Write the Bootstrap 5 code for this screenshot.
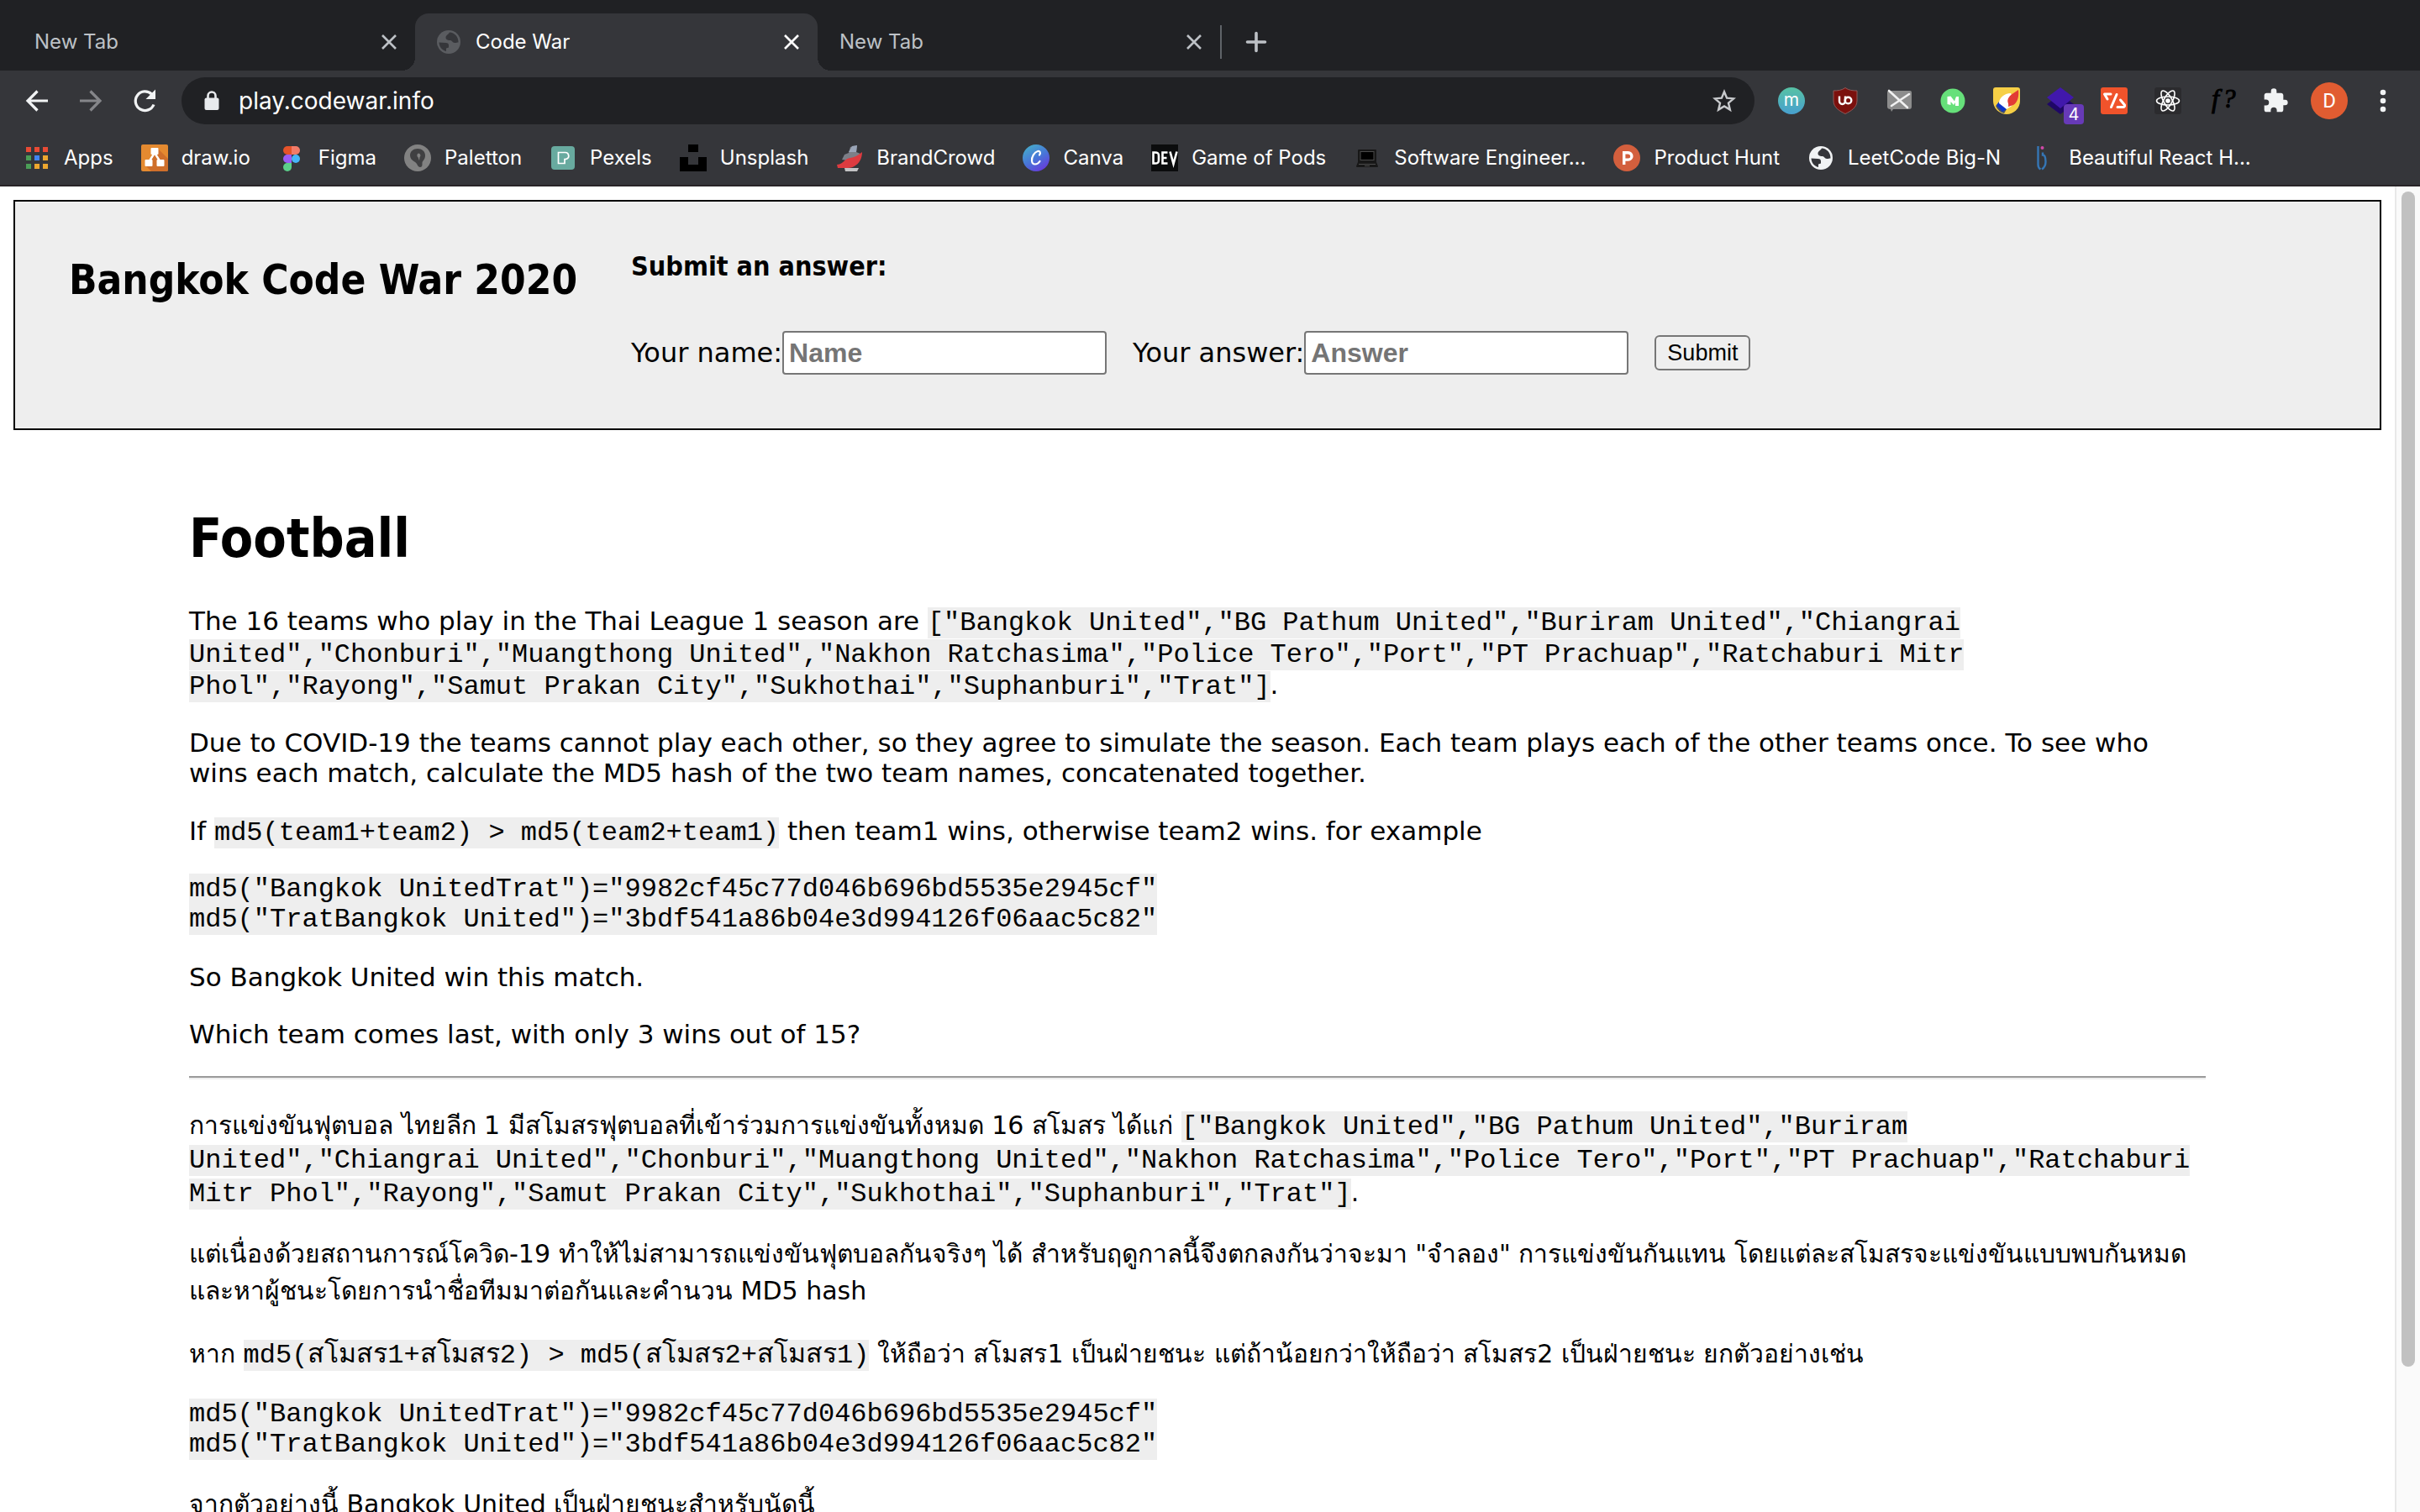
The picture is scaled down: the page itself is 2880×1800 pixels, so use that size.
<!DOCTYPE html>
<html lang="en" data-bs-theme="light">
<head>
<meta charset="utf-8">
<meta name="viewport" content="width=device-width, initial-scale=1">
<title>Code War</title>
<link href="https://cdn.jsdelivr.net/npm/bootstrap@5.3.0/dist/css/bootstrap.min.css" rel="stylesheet">
<style>
  body { font-family: "DejaVu Sans", sans-serif; font-size: 31px; line-height: 36px; color: #000; background: #fff; }
  svg { display: block; flex: none; }
  a.bm, .chrome-bar { font-family: Inter, sans-serif; font-size: 24px; line-height: 32px; }

  /* browser window */
  .tab-strip { background: #202124; height: 84px; padding: 16px 0 0 15px; }
  .win-tab { width: 479px; height: 68px; padding: 0 21px 0 26px; color: #bdc1c6; }
  .win-tab.current { background: #35363a; color: #fff; border-radius: 16px 16px 0 0; position: relative; }
  .win-tab.current::before, .win-tab.current::after { content: ""; position: absolute; bottom: 0; width: 16px; height: 16px; }
  .win-tab.current::before { left: -16px; background: radial-gradient(circle at 0 0, transparent 16px, #35363a 16px); }
  .win-tab.current::after { right: -16px; background: radial-gradient(circle at 100% 0, transparent 16px, #35363a 16px); }
  .win-tab .favicon { margin-right: 18px; }
  .tab-divider { width: 2px; height: 40px; background: #5f6368; }
  .plain-btn { background: none; border: 0; padding: 0; color: inherit; }
  .new-tab { margin-left: 28px; color: #bdc1c6; }

  .tool-row { background: #35363a; height: 72px; padding: 0 12px; }
  .tool-btn { width: 64px; height: 64px; }
  .tool-btn svg { overflow: visible; }
  .omnibox { height: 56px; border-radius: 28px; background: #202124; margin: 0 12px; padding: 0 22px 0 25px; gap: 21px; }
  .omnibox input { background: none; border: 0; outline: 0; color: #fff; font: 28px/40px Inter, sans-serif; padding: 0; min-width: 0; }
  .count-badge { right: 4px; bottom: 4px; width: 24px; height: 24px; border-radius: 4px; background: #673ab7; color: #fff; font-size: 20px; line-height: 24px; }

  .bm-row { background: #35363a; height: 66px; padding: 0 28px; gap: 33px; border-bottom: 2px solid #282427; }
  a.bm { color: #fff; gap: 16px; }

  /* page */
  .site-head { margin: 16px; border: 2px solid #000; background: #eee; padding: 58px 64px 64px; gap: 64px; }
  .site-head h2 { font: 700 49px/58px "DejaVu Sans Condensed", "DejaVu Sans", sans-serif; padding-top: 7px; }
  .site-head h3 { font: 700 32px/38px "DejaVu Sans Condensed", "DejaVu Sans", sans-serif; margin-bottom: 58px; }
  .answer-form { font-size: 32px; }
  .answer-form input { width: 386px; height: 52px; border: 2px solid #767676; border-radius: 4px; background: #fff; padding: 0 6px; margin-right: 31px; font: 700 32px/40px "Liberation Sans", Arial, sans-serif; }
  .answer-form input::placeholder { color: #757575; opacity: 1; }
  .answer-form .send { border: 2px solid #767676; border-radius: 6px; background: #efefef; color: #000; font: 27px/38px "Liberation Sans", Arial, sans-serif; padding: 0 13px; }

  .puzzle { max-width: 2400px; padding-top: 75px; }
  .puzzle h1 { font: 700 64px/76px "DejaVu Sans Condensed", "DejaVu Sans", sans-serif; margin-bottom: 41px; }
  .puzzle p { margin: 0 0 32px; }
  .puzzle code { font: 32px/28px "Liberation Mono", monospace; color: #000; background: #eee; word-wrap: normal; }
  .puzzle .with-code { line-height: 38px; }
  .puzzle code.listing { display: block; width: fit-content; line-height: 36px; padding-top: 1px; margin-bottom: 32px; }
  .puzzle hr { margin: 0 0 35px; border: 0; border-top: 2px solid #9a9a9a; border-bottom: 2px solid #eee; opacity: 1; }
  .thai { font-size: 30px; line-height: 44px; }
  .puzzle .thai p, .puzzle .thai code.listing { margin-bottom: 31px; }
  .thai .team-list { line-height: 40px; }

  .scroll-track { width: 30px; flex: none; background: #fafafa; border-left: 2px solid #e8e8e8; padding: 6px 6px 0; }
  .scroll-thumb { height: 89%; border-radius: 8px; background: #c1c1c1; }
</style>
<script src="https://cdn.jsdelivr.net/npm/bootstrap@5.3.0/dist/js/bootstrap.bundle.min.js"></script>
</head>
<body class="vh-100 d-flex flex-column overflow-hidden">

<header class="chrome-bar flex-shrink-0">
  <div class="tab-strip d-flex align-items-center">
    <div class="win-tab d-flex align-items-center"><span class="flex-grow-1">New Tab</span>
      <button class="plain-btn" aria-label="Close tab"><svg width="20" height="20" viewBox="0 0 20 20" stroke="currentColor" stroke-width="2.6"><path d="M2 2l16 16M18 2L2 18"/></svg></button></div>
    <div class="win-tab current d-flex align-items-center">
      <svg class="favicon" width="28" height="28" viewBox="0 0 28 28"><circle cx="14" cy="14" r="14" fill="#5a5c60"/><path d="M2.500 14.500l8 .5c2.500 0 3.500 1 3.500 3v2.500l-3 1V25C6 23.800 2.600 19.500 2.500 14.500zM15 2.600c-1.500 3-4.500 3-4.500 6.400 0 2.500 3.500 3 5.500 3s2.500 3 5 3 3.500-.8 4.500-.5C25.600 8 21 2.800 15 2.600z" fill="#35363a"/></svg>
      <span class="flex-grow-1">Code War</span>
      <button class="plain-btn" aria-label="Close tab"><svg width="20" height="20" viewBox="0 0 20 20" stroke="currentColor" stroke-width="2.6"><path d="M2 2l16 16M18 2L2 18"/></svg></button></div>
    <div class="win-tab d-flex align-items-center"><span class="flex-grow-1">New Tab</span>
      <button class="plain-btn" aria-label="Close tab"><svg width="20" height="20" viewBox="0 0 20 20" stroke="currentColor" stroke-width="2.6"><path d="M2 2l16 16M18 2L2 18"/></svg></button></div>
    <span class="tab-divider"></span>
    <button class="plain-btn new-tab" aria-label="New tab"><svg width="26" height="26" viewBox="0 0 26 26" stroke="currentColor" stroke-width="3.600" stroke-linecap="round"><path d="M13 2.500v21M2.500 13h21"/></svg></button>
  </div>

  <div class="tool-row d-flex align-items-center">
    <button class="plain-btn tool-btn d-flex align-items-center justify-content-center" aria-label="Back"><svg width="28" height="28" viewBox="0 0 28 28" fill="none" stroke="#f1f3f4" stroke-width="3.200"><path d="M27 14H4M14.500 2.500L3 14l11.500 11.500"/></svg></button>
    <button class="plain-btn tool-btn d-flex align-items-center justify-content-center" aria-label="Forward"><svg width="28" height="28" viewBox="0 0 28 28" fill="none" stroke="#85868a" stroke-width="3.200"><path d="M1 14h23M13.500 2.500L25 14 13.500 25.500"/></svg></button>
    <button class="plain-btn tool-btn d-flex align-items-center justify-content-center" aria-label="Reload"><svg width="30" height="30" viewBox="0 0 30 30"><path d="M26 19.500A11.300 11.300 0 1 1 23.500 7.200" fill="none" stroke="#f1f3f4" stroke-width="3.300"/><path d="M28 1.500V13H16.500z" fill="#f1f3f4"/></svg></button>
    <div class="omnibox d-flex align-items-center flex-grow-1">
      <svg width="22" height="28" viewBox="0 0 22 28"><path d="M6.500 12V8a4.500 4.500 0 0 1 9 0v4" fill="none" stroke="#e8eaed" stroke-width="2.600"/><rect x="2.500" y="10.500" width="17" height="14.500" rx="2" fill="#e8eaed"/></svg>
      <input class="flex-grow-1" type="text" value="play.codewar.info" aria-label="Address">
      <button class="plain-btn" aria-label="Bookmark this page"><svg width="28" height="28" viewBox="0 0 28 28"><path d="M14 3.200l3.100 7.500 8.100.7-6.200 5.300 1.900 7.900-6.900-4.200-6.900 4.200L9 16.700l-6.200-5.300 8.100-.7z" fill="none" stroke="#c8cacd" stroke-width="2.400"/></svg></button>
    </div>
    <button class="plain-btn tool-btn d-flex align-items-center justify-content-center" aria-label="m"><svg width="32" height="32" viewBox="0 0 32 32"><defs><linearGradient id="gm" x1="0" y1="0" x2="0" y2="1"><stop offset="0" stop-color="#57c2a4"/><stop offset="1" stop-color="#48a0cf"/></linearGradient></defs><circle cx="16" cy="16" r="16" fill="url(#gm)"/><text x="16" y="22" text-anchor="middle" font-size="21" fill="#fff">m</text></svg></button>
    <button class="plain-btn tool-btn d-flex align-items-center justify-content-center" aria-label="uBlock"><svg width="32" height="32" viewBox="0 0 32 32"><path d="M16 .5c4 3 9 3.500 14 3.500v12c0 8-7 12-14 15.500C9 28 2 24 2 16V4c5 0 10-.5 14-3.500z" fill="#7b100d" stroke="#8d5a59"/><path d="M9 10.500v6a3.500 3.500 0 0 0 7 0v-6" fill="none" stroke="#fff" stroke-width="2.400"/><circle cx="19.500" cy="15.500" r="3.800" fill="none" stroke="#fff" stroke-width="2.400"/></svg></button>
    <button class="plain-btn tool-btn d-flex align-items-center justify-content-center" aria-label="Chat blocker"><svg width="32" height="32" viewBox="0 0 32 32"><path d="M4 4h25q2 0 2 2v17q0 3-3 3H9l-2 3-1-3q-4 0-4-3V6q0-2 2-2z" fill="#8d8d8d"/><path d="M4 4l22 20M28 8L7 22" stroke="#f2f2f2" stroke-width="2.600" stroke-linecap="round"/></svg></button>
    <button class="plain-btn tool-btn d-flex align-items-center justify-content-center" aria-label="Medium"><svg width="32" height="32" viewBox="0 0 32 32"><circle cx="16" cy="16" r="14.500" fill="#66e07a"/><path d="M9.500 11l4-.5 4.500 6 2-5.500 3 0v11h-4v-4l-2 3-3.500-4V21l-4-1z" fill="#fff"/></svg></button>
    <button class="plain-btn tool-btn d-flex align-items-center justify-content-center" aria-label="Paint"><svg width="32" height="32" viewBox="0 0 32 32"><path d="M3 0h26q3 0 3 3v13a16 16 0 0 1-32 0V3q0-3 3-3z" fill="#f6cf46"/><path d="M3 22l6-5 7 9-3 5q-7-2-10-9z" fill="#44506a"/><path d="M7 17l9 9-5 3-7-8z" fill="#0d35c8"/><path d="M7 19c0-6 6-12 14-12l4 10c-2 6-6 7-9 9z" fill="#fff"/><path d="M30 3c1 8-1 15-6 18l-6 2c1-5-2-5 0-10 2-4 6-6 12-10z" fill="#e23b35"/></svg></button>
    <button class="plain-btn tool-btn position-relative d-flex align-items-center justify-content-center" aria-label="Layers, 4 new"><svg width="32" height="32" viewBox="0 0 32 32"><path d="M0 20l16-12 16 12-16 12z" fill="#1f0767"/><path d="M0 12L16 0l16 12-16 13z" fill="#4118ac"/></svg><span class="count-badge position-absolute text-center">4</span></button>
    <button class="plain-btn tool-btn d-flex align-items-center justify-content-center" aria-label="Code links"><svg width="32" height="32" viewBox="0 0 32 32"><rect width="32" height="32" rx="3" fill="#f0532b"/><path d="M12 8H4.500l3.500 6M19 8.500l-6.500 15M23.500 15l5 6q.5 2.500-2 2.500H20" fill="none" stroke="#fff" stroke-width="3" stroke-linecap="round" stroke-linejoin="round"/></svg></button>
    <button class="plain-btn tool-btn d-flex align-items-center justify-content-center" aria-label="React tools"><svg width="32" height="32" viewBox="0 0 32 32"><rect width="32" height="32" rx="3" fill="#2b2b2e"/><g fill="none" stroke="#fff" stroke-width="1.600"><ellipse cx="16" cy="16" rx="13.500" ry="5"/><ellipse cx="16" cy="16" rx="13.500" ry="5" transform="rotate(60 16 16)"/><ellipse cx="16" cy="16" rx="13.500" ry="5" transform="rotate(120 16 16)"/></g><circle cx="16" cy="16" r="2.800" fill="#fff"/></svg></button>
    <button class="plain-btn tool-btn d-flex align-items-center justify-content-center" aria-label="What font"><svg width="32" height="32" viewBox="0 0 32 32" font-family="Liberation Serif, serif" font-style="italic" stroke="#000"><text x="4" y="24" font-size="32">f</text><text x="17" y="24" font-size="31">?</text></svg></button>
    <button class="plain-btn tool-btn d-flex align-items-center justify-content-center" aria-label="Extensions"><svg width="32" height="32" viewBox="0 0 24 24" fill="#f1f3f4"><path d="M20.500 11H19V7c0-1.100-.9-2-2-2h-4V3.500a2.500 2.500 0 0 0-5 0V5H4c-1.100 0-2 .9-2 2v3.800h1.500a2.700 2.700 0 0 1 0 5.400H2V20c0 1.100.9 2 2 2h3.800v-1.500a2.700 2.700 0 0 1 5.400 0V22H17c1.100 0 2-.9 2-2v-4h1.500a2.500 2.500 0 0 0 0-5z"/></svg></button>
    <button class="plain-btn tool-btn d-flex align-items-center justify-content-center" aria-label="Profile"><svg width="44" height="44" viewBox="0 0 44 44"><circle cx="22" cy="22" r="22" fill="#e15c31"/><text x="22" y="30" text-anchor="middle" font-family="Roboto, sans-serif" font-size="24" fill="#fff">D</text></svg></button>
    <button class="plain-btn tool-btn d-flex align-items-center justify-content-center" aria-label="Menu"><svg width="8" height="28" viewBox="0 0 8 28" fill="#f1f3f4"><circle cx="4" cy="4" r="3.300"/><circle cx="4" cy="14" r="3.300"/><circle cx="4" cy="24" r="3.300"/></svg></button>
  </div>

  <nav class="bm-row d-flex align-items-center text-nowrap" aria-label="Bookmarks">
    <a class="bm d-flex align-items-center text-decoration-none" href="#"><svg width="32" height="32" viewBox="0 0 32 32"><path d="M3 3h6v6H3zM13 3h6v6h-6zM23 3h6v6h-6z" fill="#e94b35"/><path d="M3 13h6v6H3zM3 23h6v6H3z" fill="#4b9e57"/><path d="M13 13h6v6h-6z" fill="#4285f4"/><path d="M23 13h6v6h-6zM13 23h6v6h-6zM23 23h6v6h-6z" fill="#eda72f"/></svg>Apps</a>
    <a class="bm d-flex align-items-center text-decoration-none" href="#"><svg width="32" height="32" viewBox="0 0 32 32"><rect width="32" height="32" rx="2" fill="#e48a30"/><path d="M20 5l12 12v13q0 2-2 2H12l-7-7z" fill="#cf6f2b"/><path d="M16 10L9 21M16 10l7 11" stroke="#fff" stroke-width="2.400"/><g fill="#fff"><rect x="11.500" y="4" width="9" height="8" rx="1"/><rect x="4.500" y="18" width="9" height="8" rx="1"/><rect x="18.500" y="18" width="9" height="8" rx="1"/></g></svg>draw.io</a>
    <a class="bm d-flex align-items-center text-decoration-none" href="#"><svg width="32" height="32" viewBox="0 0 32 32"><path d="M16 2h-5a5 5 0 0 0 0 10h5z" fill="#e5532a"/><path d="M16 2h5a5 5 0 0 1 0 10h-5z" fill="#f37b68"/><path d="M16 12h-5a5 5 0 0 0 0 10h5z" fill="#9b5bf5"/><circle cx="21" cy="17" r="5" fill="#47b5f8"/><path d="M16 22h-5a5 5 0 1 0 5 5z" fill="#5bcf8a"/></svg>Figma</a>
    <a class="bm d-flex align-items-center text-decoration-none" href="#"><svg width="32" height="32" viewBox="0 0 32 32"><circle cx="16" cy="16" r="16" fill="#828282"/><path d="M16 5c5 0 9 3 9 8 0 6-4 6-3.500 10 .2 3-1 4-2.500 4-3 0-3-4-6-6-4-2-6-5-6-8 0-5 4-8 9-8z" fill="#404042"/><path d="M17 10.500a2.700 2.700 0 0 1 1.500 4.700l-.5 4-1.500-4a2.700 2.700 0 0 1 .5-4.700z" fill="#828282"/></svg>Paletton</a>
    <a class="bm d-flex align-items-center text-decoration-none" href="#"><svg width="32" height="32" viewBox="0 0 32 32"><rect x="2" y="2" width="28" height="28" rx="4" fill="#68aa9f"/><path d="M10.500 9.500h8a4 4 0 0 1 2.500 7.300c-.8.700-1.500.7-3 .7v5h-7.500z" fill="none" stroke="#fff" stroke-width="1.700"/></svg>Pexels</a>
    <a class="bm d-flex align-items-center text-decoration-none" href="#"><svg width="32" height="32" viewBox="0 0 32 32"><path d="M10 0h12v9H10zM0 15h10v9h12v-9h10v17H0z"/></svg>Unsplash</a>
    <a class="bm d-flex align-items-center text-decoration-none" href="#"><svg width="32" height="32" viewBox="0 0 32 32"><path d="M17 3l8-2-1 8 5 2-10 9-12-2 3-6 5-2z" fill="#7c7f88"/><path d="M19 2l6-1-1 8-9 0z" fill="#9aa5b8"/><path d="M31 9c0 9-5 18-17 19H2l-1-4c9-1 8-7 16-8 6-1 9-3 14-7z" fill="#dd3b40"/><path d="M10 28h17l-2 4H11z" fill="#c3c3c5"/></svg>BrandCrowd</a>
    <a class="bm d-flex align-items-center text-decoration-none" href="#"><svg width="32" height="32" viewBox="0 0 32 32"><defs><linearGradient id="gc" x1=".2" y1="0" x2=".8" y2="1"><stop offset="0" stop-color="#46adca"/><stop offset=".5" stop-color="#4777d8"/><stop offset="1" stop-color="#6a35dc"/></linearGradient></defs><circle cx="16" cy="16" r="16" fill="url(#gc)"/><path d="M20 12.500c2-3 .5-5-2-4.500-4 1-7.500 7-7 11.500.5 5.500 6.500 5 9.500.5" fill="none" stroke="#fff" stroke-width="2.200" stroke-linecap="round"/></svg>Canva</a>
    <a class="bm d-flex align-items-center text-decoration-none" href="#"><svg width="32" height="32" viewBox="0 0 32 32"><rect width="32" height="32" fill="#0b0c0d"/><g fill="none" stroke="#fff" stroke-width="2.600"><path d="M2.500 9.500v13h2c3.500 0 4.500-1 4.500-4v-5c0-3-1-4-4.500-4zM19.500 9.500h-6v13h6M13.500 16h5M22.500 8.500L26.500 23l4-14.500"/></g></svg>Game of Pods</a>
    <a class="bm d-flex align-items-center text-decoration-none" href="#"><svg width="32" height="32" viewBox="0 0 32 32"><path d="M6 6h20q1 0 1 1v14l2 5q0 1-1 1H4q-1 0-1-1l2-5V7q0-1 1-1z" fill="#171717"/><rect x="8" y="8.500" width="16" height="10" fill="#000" stroke="#4a4a4a"/><path d="M6 23.500h20M13 25.500h6" stroke="#4c4c4c"/></svg>Software Engineer...</a>
    <a class="bm d-flex align-items-center text-decoration-none" href="#"><svg width="32" height="32" viewBox="0 0 32 32"><circle cx="16" cy="16" r="16" fill="#d35f3d"/><path d="M12.700 24V9.700h5a4.200 4.200 0 0 1 0 8.400h-5" fill="none" stroke="#fff" stroke-width="3.400"/></svg>Product Hunt</a>
    <a class="bm d-flex align-items-center text-decoration-none" href="#"><svg width="32" height="32" viewBox="-2 -2 32 32"><circle cx="14" cy="14" r="14" fill="#f1f3f4"/><path d="M2.500 14.500l8 .5c2.500 0 3.500 1 3.500 3v2.500l-3 1V25C6 23.800 2.600 19.500 2.500 14.500zM15 2.600c-1.500 3-4.500 3-4.500 6.400 0 2.500 3.500 3 5.500 3s2.500 3 5 3 3.500-.8 4.500-.5C25.600 8 21 2.800 15 2.600z" fill="#35363a"/></svg>LeetCode Big-N</a>
    <a class="bm d-flex align-items-center text-decoration-none" href="#"><svg width="32" height="32" viewBox="0 0 32 32"><path d="M11.500 2v22q0 4 3 5.500M16 29.500q4.500-3 4.500-9 0-8-3.500-8v-3" fill="none" stroke="#3576b5" stroke-width="2.400"/><circle cx="16.500" cy="4" r="2" fill="#d048a8"/></svg>Beautiful React H...</a>
  </nav>
</header>

<div class="d-flex flex-grow-1 overflow-hidden">
  <div class="flex-grow-1 overflow-hidden">
    <section class="site-head d-flex align-items-start">
      <h2 class="mb-0 text-nowrap">Bangkok Code War 2020</h2>
      <div>
        <h3>Submit an answer:</h3>
        <form class="answer-form d-flex align-items-center text-nowrap">
          <label for="name">Your name:</label><input id="name" type="text" placeholder="Name">
          <label for="answer">Your answer:</label><input id="answer" type="text" placeholder="Answer">
          <button class="send" type="button">Submit</button>
        </form>
      </div>
    </section>

    <main class="puzzle mx-auto">
      <h1>Football</h1>
      <p class="with-code">The 16 teams who play in the Thai League 1 season are <code>["Bangkok United","BG Pathum United","Buriram United","Chiangrai<br>United","Chonburi","Muangthong United","Nakhon Ratchasima","Police Tero","Port","PT Prachuap","Ratchaburi Mitr<br>Phol","Rayong","Samut Prakan City","Sukhothai","Suphanburi","Trat"]</code>.</p>
      <p>Due to COVID-19 the teams cannot play each other, so they agree to simulate the season. Each team plays each of the other teams once. To see who<br>wins each match, calculate the MD5 hash of the two team names, concatenated together.</p>
      <p class="with-code">If <code>md5(team1+team2) &gt; md5(team2+team1)</code> then team1 wins, otherwise team2 wins. for example</p>
      <code class="listing">md5("Bangkok UnitedTrat")="9982cf45c77d046b696bd5535e2945cf"<br>md5("TratBangkok United")="3bdf541a86b04e3d994126f06aac5c82"</code>
      <p>So Bangkok United win this match.</p>
      <p>Which team comes last, with only 3 wins out of 15?</p>
      <hr>
      <div class="thai" lang="th">
        <p class="team-list">การแข่งขันฟุตบอล ไทยลีก 1 มีสโมสรฟุตบอลที่เข้าร่วมการแข่งขันทั้งหมด 16 สโมสร ได้แก่ <code>["Bangkok United","BG Pathum United","Buriram<br>United","Chiangrai United","Chonburi","Muangthong United","Nakhon Ratchasima","Police Tero","Port","PT Prachuap","Ratchaburi<br>Mitr Phol","Rayong","Samut Prakan City","Sukhothai","Suphanburi","Trat"]</code>.</p>
        <p class="text-nowrap">แต่เนื่องด้วยสถานการณ์โควิด-19 ทำให้ไม่สามารถแข่งขันฟุตบอลกันจริงๆ ได้ สำหรับฤดูกาลนี้จึงตกลงกันว่าจะมา "จำลอง" การแข่งขันกันแทน โดยแต่ละสโมสรจะแข่งขันแบบพบกันหมด<br>และหาผู้ชนะโดยการนำชื่อทีมมาต่อกันและคำนวน MD5 hash</p>
        <p>หาก <code>md5(สโมสร1+สโมสร2) &gt; md5(สโมสร2+สโมสร1)</code> ให้ถือว่า สโมสร1 เป็นฝ่ายชนะ แต่ถ้าน้อยกว่าให้ถือว่า สโมสร2 เป็นฝ่ายชนะ ยกตัวอย่างเช่น</p>
        <code class="listing">md5("Bangkok UnitedTrat")="9982cf45c77d046b696bd5535e2945cf"<br>md5("TratBangkok United")="3bdf541a86b04e3d994126f06aac5c82"</code>
        <p>จากตัวอย่างนี้ Bangkok United เป็นฝ่ายชนะสำหรับนัดนี้</p>
      </div>
    </main>
  </div>
  <div class="scroll-track"><div class="scroll-thumb"></div></div>
</div>
</body>
</html>
